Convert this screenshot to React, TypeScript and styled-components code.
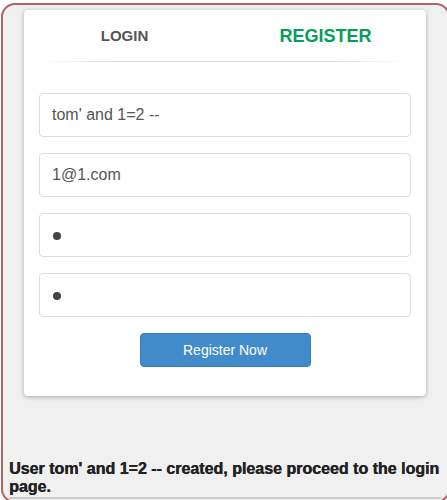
import React from "react"
import styled, { createGlobalStyle } from "styled-components"

const GlobalStyle = createGlobalStyle`
  html, body {
    margin: 0;
    padding: 0;
    background: #fff;
    font-family: "Liberation Sans", Arial, sans-serif;
    overflow: hidden;
  }
`

const Frame = styled.div`
  margin: 3px 0 0 1px;
  width: 449px;
  height: 500px;
  box-sizing: border-box;
  border: 2px solid #b06666;
  border-radius: 14px;
  background: #f0f0f0;
  padding: 5px 0 0 21px;
  overflow: hidden;
`

const Card = styled.div`
  width: 402px;
  height: 386px;
  box-sizing: border-box;
  background: #fff;
  border-radius: 4px;
  box-shadow: 0 1px 4px rgba(0, 0, 0, 0.3);
  padding: 0 15px;
  display: flex;
  flex-direction: column;
`

const Tabs = styled.div`
  display: grid;
  grid-template-columns: 1fr 1fr;
  height: 51px;
  margin: 0 -15px;
`

const Tab = styled.div<{ $active?: boolean }>`
  display: flex;
  align-items: center;
  justify-content: center;
  font-weight: bold;
  text-transform: uppercase;
  font-size: ${p => (p.$active ? "18px" : "15px")};
  color: ${p => (p.$active ? "#029f5b" : "#555")};
  padding-top: ${p => (p.$active ? "2px" : "0")};
`

const Divider = styled.div`
  height: 1px;
  margin: 0 6px 0 1px;
  background: linear-gradient(to right, rgba(0, 0, 0, 0), #ddd 20%, #ddd 80%, rgba(0, 0, 0, 0));
`

const Form = styled.div`
  display: flex;
  flex-direction: column;
  gap: 16px;
  margin-top: 31px;
`

const Field = styled.div`
  height: 44px;
  box-sizing: border-box;
  border: 1px solid #ddd;
  border-radius: 4px;
  padding: 0 12px;
  display: flex;
  align-items: center;
  font-size: 16px;
  color: #555;
`

const Dot = styled.span`
  display: inline-block;
  width: 8px;
  height: 8px;
  border-radius: 50%;
  background: #444;
  margin: 1px 0 0 1px;
`

const Button = styled.button`
  align-self: center;
  margin-top: 16px;
  width: 171px;
  height: 34px;
  background: #428bca;
  border: 1px solid #357ebd;
  border-radius: 4px;
  color: #fff;
  font-family: "Liberation Sans", Arial, sans-serif;
  font-size: 14px;
  padding: 0;
`

const Message = styled.div`
  margin: 64px 0 0 -15px;
  width: 432px;
  font-size: 16px;
  font-weight: 900;
  line-height: 18px;
  color: #222;
  text-shadow: 0.4px 0 0 #222;
  padding-bottom: 1px;
  border-bottom: 2px solid #ccc;
`

export default function App() {
  return (
    <>
      <GlobalStyle />
      <Frame>
        <Card>
          <Tabs>
            <Tab>Login</Tab>
            <Tab $active>Register</Tab>
          </Tabs>
          <Divider />
          <Form>
            <Field>tom' and 1=2 --</Field>
            <Field>1@1.com</Field>
            <Field>
              <Dot />
            </Field>
            <Field>
              <Dot />
            </Field>
          </Form>
          <Button>Register Now</Button>
        </Card>
        <Message>User tom' and 1=2 -- created, please proceed to the login page.</Message>
      </Frame>
    </>
  )
}
